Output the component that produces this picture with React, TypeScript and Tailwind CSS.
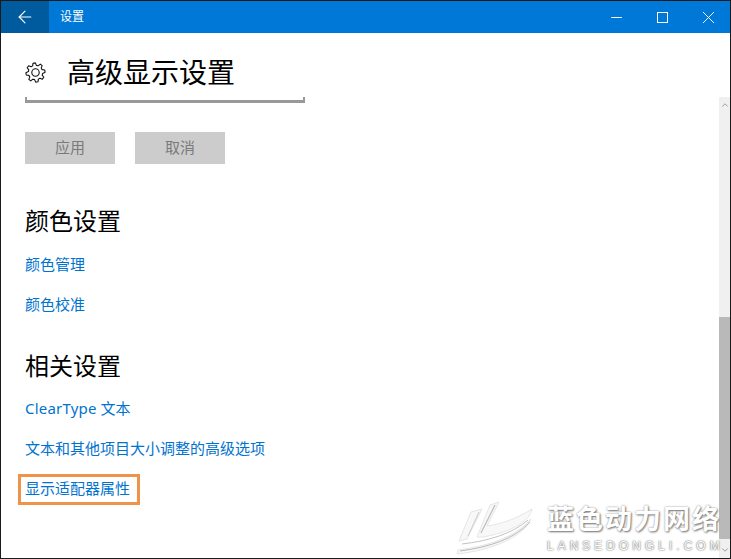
import { ArrowLeft, Minus, X, ChevronUp, ChevronDown } from 'lucide-react'

const font = "font-['Noto_Sans','Noto_Sans_CJK_SC',sans-serif]"

// 8 tooth gear outline, same shape as the settings glyph
function gearPath() {
  const pts: string[] = []
  for (let i = 0; i < 8; i++) {
    const a = (i * Math.PI) / 4 - Math.PI / 8
    const step = Math.PI / 4
    const list: [number, number][] = [
      [7.2, a - step * 0.02],
      [9.6, a + step * 0.16],
      [9.6, a + step * 0.48],
      [7.2, a + step * 0.66],
    ]
    for (const [r, t] of list) {
      pts.push(`${(10.5 + r * Math.cos(t)).toFixed(2)} ${(10.5 + r * Math.sin(t)).toFixed(2)}`)
    }
  }
  return `M${pts.join('L')}Z`
}

function Gear() {
  return (
    <svg width="21" height="21" viewBox="0 0 21 21" fill="none" stroke="#111" strokeWidth="1.1" className="shrink-0">
      <path d={gearPath()} strokeLinejoin="round" />
      <circle cx="10.5" cy="10.5" r="3.7" />
    </svg>
  )
}

function Watermark() {
  return (
    <div className="absolute bottom-0 right-0 flex h-[64px] w-[276px] items-start">
      <svg width="96" height="64" viewBox="0 0 96 64" className="shrink-0">
        <g fill="#f8f8f8" stroke="#e0e0e0" strokeWidth="0.8">
          <path d="M17 18 L28 15 L13 45 L5 47 Z" />
          <path d="M36 11 L45 8 L33 32 C48 30 64 24 78 15 C76 27 58 38 29 43 L23 43 Z" />
          <path d="M4 56 C34 52 60 44 77 25 C70 42 40 56 3 60 Z" />
        </g>
        <path d="M41 11 L27 39" stroke="#bcbcbc" strokeWidth="1.2" fill="none" />
        <path d="M25 18 L14 42" stroke="#cccccc" strokeWidth="1" fill="none" />
        <path d="M8 50 C34 47 58 40 74 26" stroke="#c4c4c4" strokeWidth="1" fill="none" />
        <path d="M6 57 C36 53 60 45 76 28" stroke="#b8b8b8" strokeWidth="1" fill="none" />
      </svg>
      <div className="ml-[-3px] flex flex-col">
        <span className="mt-[7px] whitespace-nowrap text-[27px] font-bold leading-[36px] tracking-[2px] text-white [text-shadow:1px_1px_2px_#777,0_0_2px_#999]">
          蓝色动力网络
        </span>
        <span className="mt-[2px] whitespace-nowrap font-['Liberation_Sans',sans-serif] text-[12px] leading-[14px] tracking-[4px] text-white [text-shadow:0_0_2px_#666,0_0_1px_#888]">
          LANSEDONGLI.COM
        </span>
      </div>
    </div>
  )
}

export default function App() {
  return (
    <div className={`relative flex h-[559px] w-[731px] flex-col overflow-hidden border border-[#1a1a1a] bg-white ${font}`}>
      {/* TITLE BAR */}
      <div className="flex h-[32px] shrink-0 items-center bg-[#0078d7] text-white">
        <div className="flex h-full w-[48px] items-center justify-center bg-[#005a9e]">
          <ArrowLeft size={20} strokeWidth={1.3} />
        </div>
        <span className="ml-[11px] text-[12px]">设置</span>
        <div className="ml-auto flex h-full">
          <div className="flex w-[46px] items-center justify-center pl-[2px]">
            <Minus size={17} strokeWidth={1.4} />
          </div>
          <div className="flex w-[46px] items-center justify-center pl-[2px]">
            <div className="h-[11px] w-[11px] border border-white" />
          </div>
          <div className="flex w-[46px] items-center justify-center pl-[2px]">
            <X size={21} strokeWidth={1.1} />
          </div>
        </div>
      </div>

      {/* PAGE HEADER */}
      <div className="flex h-[64px] shrink-0 items-center pl-[24px] pt-[14px]">
        <Gear />
        <h1 className="ml-[21px] text-[28px] leading-[40px] text-black">高级显示设置</h1>
      </div>

      <div className="flex min-h-0 flex-1">
        {/* SCROLL CONTENT */}
        <div className="min-w-0 flex-1 pl-[24px]">
          <div className="h-[6px] w-[280px] border-x-2 border-b-[3px] border-[#999999]" />

          <div className="mt-[29px] flex gap-[20px]">
            <div className="flex h-[32px] w-[90px] items-center justify-center bg-[#cccccc] pb-[2px] text-[15px] text-[#7a7a7a]">应用</div>
            <div className="flex h-[32px] w-[90px] items-center justify-center bg-[#cccccc] pb-[2px] text-[15px] text-[#7a7a7a]">取消</div>
          </div>

          <h2 className="mt-[39px] text-[24px] leading-[36px] text-black">颜色设置</h2>
          <p className="mt-[14px] text-[15px] leading-[22px] text-[#0073cf]">颜色管理</p>
          <p className="mt-[18px] text-[15px] leading-[22px] text-[#0073cf]">颜色校准</p>

          <h2 className="mt-[33px] text-[24px] leading-[36px] text-black">相关设置</h2>
          <p className="mt-[13px] text-[15px] leading-[22px] text-[#0073cf]">
            <span className="tracking-[0.2px]">ClearType</span> 文本
          </p>
          <p className="mt-[18px] text-[15px] leading-[22px] text-[#0073cf]">文本和其他项目大小调整的高级选项</p>
          <p className="relative mt-[18px] text-[15px] leading-[22px] text-[#0073cf]">
            显示适配器属性
            <span className="absolute left-[-7px] top-[-3px] h-[31px] w-[122px] border-[3px] border-[#f0934a]" />
          </p>
        </div>

        {/* SCROLLBAR */}
        <div className="flex w-[11px] shrink-0 flex-col bg-[#f0f0f0] text-[#8a8a8a]">
          <div className="flex h-[16px] items-center justify-center">
            <ChevronUp size={10} strokeWidth={2} />
          </div>
          <div className="mt-[204px] h-[222px] bg-[#b9b9b9]" />
          <div className="mt-auto flex h-[16px] items-center justify-center">
            <ChevronDown size={10} strokeWidth={2} />
          </div>
        </div>
      </div>

      <Watermark />
    </div>
  )
}
